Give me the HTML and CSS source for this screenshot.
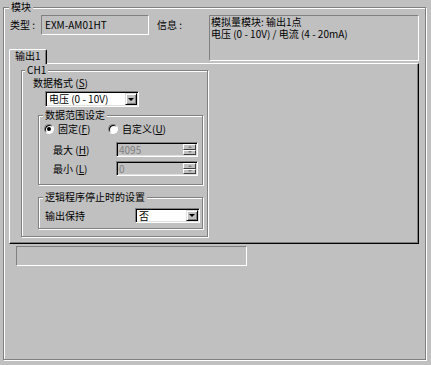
FILE: index.html
```html
<!DOCTYPE html>
<html lang="zh-CN">
<head>
    <meta charset="UTF-8">
    <title>模块设置</title>
    <link rel="stylesheet" href="styles.css">
</head>
<body>

    <!-- 模块 -->
    <div class="group module">
        <div class="group-title">模块</div>

        <div class="info-row">
            <div class="label type-label">类型 :</div>
            <div class="textbox">EXM-AM01HT</div>
            <div class="label info-label">信息 :</div>
            <div class="infobox">模拟量模块: 输出1点<br>电压 (0 - 10V) / 电流 (4 - 20mA)</div>
        </div>

        <!-- 탭 -->
        <div class="tabs">
            <div class="tab">输出1</div>
            <div class="panel">
                <div class="group ch">
                    <div class="group-title">CH1</div>

                    <div class="format-label">数据格式 (<u>S</u>)</div>
                    <div class="combo">
                        <div class="combo-text">电压 (0 - 10V)</div>
                        <div class="combo-btn"><span class="arrow"></span></div>
                    </div>

                    <div class="group range">
                        <div class="group-title">数据范围设定</div>
                        <div class="radio-row">
                            <div class="radio-item first">
                                <span class="radio"><span class="dot"></span></span>
                                <span>固定(<u>F</u>)</span>
                            </div>
                            <div class="radio-item">
                                <span class="radio"></span>
                                <span>自定义(<u>U</u>)</span>
                            </div>
                        </div>
                        <div class="spin-row">
                            <div class="spin-label">最大 (<u>H</u>)</div>
                            <div class="spin">
                                <div class="spin-text">4095</div>
                                <div class="spin-btns">
                                    <div class="spin-btn"><span class="mini up"></span></div>
                                    <div class="spin-btn"><span class="mini down"></span></div>
                                </div>
                            </div>
                        </div>
                        <div class="spin-row second">
                            <div class="spin-label">最小 (<u>L</u>)</div>
                            <div class="spin">
                                <div class="spin-text">0</div>
                                <div class="spin-btns">
                                    <div class="spin-btn"><span class="mini up"></span></div>
                                    <div class="spin-btn"><span class="mini down"></span></div>
                                </div>
                            </div>
                        </div>
                    </div>

                    <div class="group stop">
                        <div class="group-title">逻辑程序停止时的设置</div>
                        <div class="stop-row">
                            <div class="stop-label">输出保持</div>
                            <div class="combo small">
                                <div class="combo-text">否</div>
                                <div class="combo-btn"><span class="arrow"></span></div>
                            </div>
                        </div>
                    </div>
                </div>
            </div>
        </div>

        <div class="status"></div>
    </div>

</body>
</html>
```

FILE: styles.css
```css
* {
    box-sizing: border-box;
}
body {
    margin: 0;
    width: 431px;
    height: 365px;
    overflow: hidden;
    background: #c0c0c0;
    font-family: "Noto Sans CJK SC", "Liberation Sans", sans-serif;
    font-size: 10px;
    line-height: 12px;
    color: #000;
}
u {
    text-decoration-thickness: 1px;
}

/* 에칭 그룹박스 */
.group {
    border: 1px solid #808080;
    box-shadow: inset 1px 1px #fff, 1px 1px #fff;
}
.group-title {
    display: table;
    margin-top: -7px;
    padding: 0 2px;
    background: #c0c0c0;
}

/* 움푹 들어간 박스 */
.textbox, .infobox, .status {
    border: 1px solid;
    border-color: #808080 #fff #fff #808080;
}

.module {
    margin: 7px 0 0 3px;
    width: 423px;
    height: 353px;
}
.module > .group-title {
    margin-left: 5px;
}

.info-row {
    display: flex;
    align-items: flex-start;
    margin: 2px 0 0 6px;
}
.label {
    line-height: 20px;
}
.type-label {
    width: 31px;
}
.textbox {
    width: 108px;
    height: 20px;
    padding: 0 3px;
    line-height: 18px;
}
.info-label {
    width: 52px;
    margin-left: 8px;
}
.infobox {
    width: 210px;
    height: 46px;
    margin-bottom: -26px;
    padding: 0 0 0 1px;
    line-height: 12px;
}

/* 탭 */
.tabs {
    margin: 14px 0 0 5px;
    width: 410px;
}
.tab {
    position: relative;
    z-index: 1;
    width: 38px;
    height: 15px;
    margin-bottom: -1px;
    padding-left: 5px;
    background: #c0c0c0;
    border: 1px solid #fff;
    border-right-color: #000;
    border-bottom: none;
    border-radius: 2px 2px 0 0;
    box-shadow: inset -1px 0 #808080;
}
.panel {
    width: 410px;
    height: 181px;
    padding: 6px 0 0 11px;
    border: 1px solid;
    border-color: #fff #000 #000 #fff;
    box-shadow: inset -1px -1px #808080;
}

.ch {
    width: 187px;
    height: 167px;
}
.ch > .group-title {
    margin-left: 3px;
}
.format-label {
    margin: 1px 0 0 11px;
}

/* 콤보박스 */
.combo {
    display: flex;
    width: 94px;
    height: 16px;
    margin: 2px 0 0 23px;
    padding: 1px;
    background: #fff;
    border: 1px solid;
    border-color: #808080 #fff #fff #808080;
    box-shadow: inset 1px 1px #000, inset -1px -1px #dfdfdf;
}
.combo.small {
    width: 65px;
    height: 15px;
    margin: 0;
}
.combo-text {
    flex: 1;
    padding-left: 2px;
    line-height: 11px;
}
.combo-btn {
    width: 12px;
    display: flex;
    align-items: center;
    justify-content: center;
    background: #c0c0c0;
    border: 1px solid;
    border-color: #dfdfdf #000 #000 #dfdfdf;
    box-shadow: inset 1px 1px #fff, inset -1px -1px #808080;
}
.arrow {
    width: 0;
    height: 0;
    border-left: 3px solid transparent;
    border-right: 3px solid transparent;
    border-top: 3px solid #000;
}

.range {
    width: 165px;
    height: 70px;
    margin: 8px 0 0 16px;
}
.range > .group-title, .stop > .group-title {
    margin-left: 4px;
}

/* 라디오 */
.radio-row {
    display: flex;
    align-items: center;
    margin: 2px 0 0 5px;
}
.radio-item {
    display: flex;
    align-items: center;
    gap: 4px;
}
.radio-item.first {
    width: 64px;
}
.radio {
    width: 10px;
    height: 10px;
    display: flex;
    align-items: center;
    justify-content: center;
    border-radius: 50%;
    background: #fff;
    border: 1px solid;
    border-color: #808080 #fff #fff #808080;
    box-shadow: inset 1px 1px #000;
}
.dot {
    width: 4px;
    height: 4px;
    border-radius: 50%;
    background: #000;
}

/* 스핀 에디트 (비활성) */
.spin-row {
    display: flex;
    align-items: center;
    margin: 7px 0 0 14px;
}
.spin-row.second {
    margin-top: 4px;
}
.spin-label {
    width: 63px;
}
.spin {
    display: flex;
    width: 82px;
    height: 15px;
    padding: 1px;
    border: 1px solid;
    border-color: #808080 #fff #fff #808080;
    box-shadow: inset 1px 1px #000, inset -1px -1px #dfdfdf;
}
.spin-text {
    flex: 1;
    padding-left: 1px;
    line-height: 11px;
    color: #808080;
}
.spin-btns {
    width: 13px;
    display: flex;
    flex-direction: column;
}
.spin-btn {
    flex: 1;
    display: flex;
    align-items: center;
    justify-content: center;
    border: 1px solid;
    border-color: #fff #404040 #404040 #fff;
}
.mini {
    width: 0;
    height: 0;
    border-left: 2px solid transparent;
    border-right: 2px solid transparent;
}
.mini.up {
    border-bottom: 2px solid #808080;
}
.mini.down {
    border-top: 2px solid #808080;
}

.stop {
    width: 165px;
    height: 32px;
    margin: 12px 0 0 16px;
}
.stop-row {
    display: flex;
    align-items: center;
    margin: 5px 0 0 6px;
}
.stop-label {
    width: 90px;
}

.status {
    width: 231px;
    height: 20px;
    margin: 2px 0 0 12px;
}
```
